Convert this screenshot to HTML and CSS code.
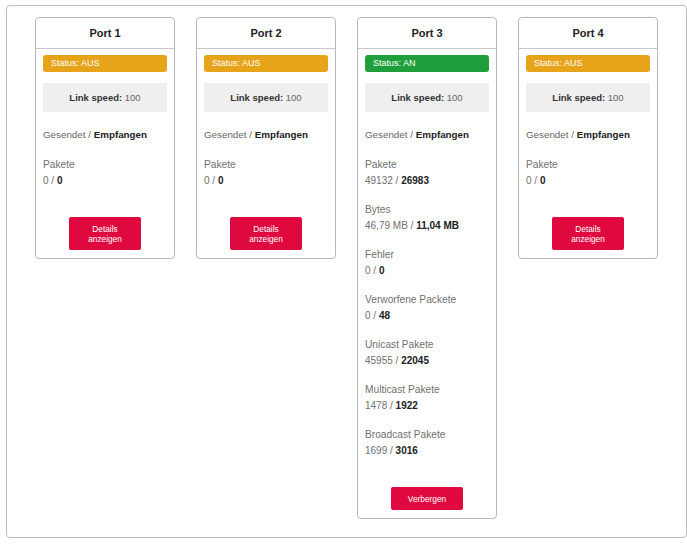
FILE: index.html
```html
<!DOCTYPE html>
<html lang="de">
<head>
<meta charset="utf-8">
<title>Ports</title>
<link rel="stylesheet" href="styles.css">
</head>
<body>
<div class="wrap">
  <div class="card">
    <div class="card-head">Port 1</div>
    <div class="card-body">
      <div class="status off">Status: AUS</div>
      <div class="speed"><b>Link speed:</b> 100</div>
      <div class="legend">Gesendet / <b>Empfangen</b></div>
      <div class="stat"><div class="lbl">Pakete</div><div class="val">0 / <b>0</b></div></div>
      <div class="actions"><button class="btn">Details<br>anzeigen</button></div>
    </div>
  </div>
  <div class="card">
    <div class="card-head">Port 2</div>
    <div class="card-body">
      <div class="status off">Status: AUS</div>
      <div class="speed"><b>Link speed:</b> 100</div>
      <div class="legend">Gesendet / <b>Empfangen</b></div>
      <div class="stat"><div class="lbl">Pakete</div><div class="val">0 / <b>0</b></div></div>
      <div class="actions"><button class="btn">Details<br>anzeigen</button></div>
    </div>
  </div>
  <div class="card">
    <div class="card-head">Port 3</div>
    <div class="card-body">
      <div class="status on">Status: AN</div>
      <div class="speed"><b>Link speed:</b> 100</div>
      <div class="legend">Gesendet / <b>Empfangen</b></div>
      <div class="stat"><div class="lbl">Pakete</div><div class="val">49132 / <b>26983</b></div></div>
      <div class="stat"><div class="lbl">Bytes</div><div class="val">46,79 MB / <b>11,04 MB</b></div></div>
      <div class="stat"><div class="lbl">Fehler</div><div class="val">0 / <b>0</b></div></div>
      <div class="stat"><div class="lbl">Verworfene Packete</div><div class="val">0 / <b>48</b></div></div>
      <div class="stat"><div class="lbl">Unicast Pakete</div><div class="val">45955 / <b>22045</b></div></div>
      <div class="stat"><div class="lbl">Multicast Pakete</div><div class="val">1478 / <b>1922</b></div></div>
      <div class="stat"><div class="lbl">Broadcast Pakete</div><div class="val">1699 / <b>3016</b></div></div>
      <div class="actions"><button class="btn">Verbergen</button></div>
    </div>
  </div>
  <div class="card">
    <div class="card-head">Port 4</div>
    <div class="card-body">
      <div class="status off">Status: AUS</div>
      <div class="speed"><b>Link speed:</b> 100</div>
      <div class="legend">Gesendet / <b>Empfangen</b></div>
      <div class="stat"><div class="lbl">Pakete</div><div class="val">0 / <b>0</b></div></div>
      <div class="actions"><button class="btn">Details<br>anzeigen</button></div>
    </div>
  </div>
</div>
</body>
</html>
```
FILE: styles.css
```css
html, body {
  margin: 0;
  padding: 0;
  background: #fff;
}
body {
  padding: 5px 0 0 6px;
  font-family: "Liberation Sans", Arial, sans-serif;
  font-size: 10px;
  color: #555;
}
.wrap {
  box-sizing: border-box;
  width: 681px;
  height: 533px;
  border: 1px solid #bdbdbd;
  border-radius: 4px;
  padding: 11px 0 0 28px;
  display: flex;
  align-items: flex-start;
  gap: 21px;
}
.card {
  box-sizing: border-box;
  width: 140px;
  border: 1px solid #b9b9b9;
  border-radius: 4px;
  background: #fff;
}
.card-head {
  height: 30px;
  line-height: 30px;
  text-align: center;
  font-weight: bold;
  font-size: 11px;
  color: #222;
  border-bottom: 1px solid #c8c8c8;
}
.card-body {
  padding: 6px 7px 8px 7px;
}
.status {
  height: 17px;
  line-height: 17px;
  border-radius: 3px;
  color: #fff;
  font-size: 9px;
  padding-left: 8px;
}
.status.off { background: #e7a319; }
.status.on { background: #1f9f3b; }
.speed {
  margin-top: 11px;
  height: 29px;
  line-height: 29px;
  background: #efefef;
  text-align: center;
  color: #666;
  font-size: 9.5px;
}
.speed b { color: #333; }
.legend {
  margin-top: 15px;
  line-height: 16px;
  color: #666;
  font-size: 9.8px;
}
.legend b { color: #222; }
.stat {
  margin-top: 14px;
  line-height: 16px;
}
.stat + .stat { margin-top: 13px; }
.lbl { color: #707070; font-size: 10.2px; }
.val { color: #707070; font-size: 10px; }
.val b { color: #222; }
.actions {
  margin-top: 28px;
  display: flex;
  justify-content: center;
}
.btn {
  width: 72px;
  border: none;
  border-radius: 2px;
  background: #e0093f;
  color: #fff;
  font-family: "Liberation Sans", Arial, sans-serif;
  font-size: 8.3px;
  line-height: 10px;
  padding: 6.5px 0;
  text-align: center;
}
```
